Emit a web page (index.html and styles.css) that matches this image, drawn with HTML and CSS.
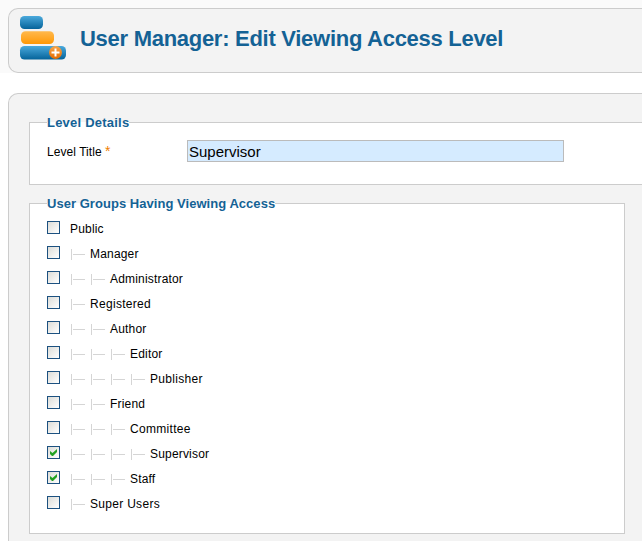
FILE: index.html
```html
<!DOCTYPE html>
<html lang="en">
<head>
<meta charset="utf-8">
<title>User Manager: Edit Viewing Access Level</title>
<link rel="stylesheet" href="styles.css">
</head>
<body>
<header class="top">
  <div class="toolbar">
    <svg class="logo" width="48" height="46" viewBox="0 0 48 46" aria-hidden="true">
      <defs>
        <linearGradient id="blue" x2="0" y2="1"><stop stop-color="#4aa9dc"/><stop offset="1" stop-color="#05639a"/></linearGradient>
        <linearGradient id="orange" x2="0" y2="1"><stop stop-color="#ffb94d"/><stop offset="1" stop-color="#ff9805"/></linearGradient>
        <linearGradient id="badge" x2="0" y2="1"><stop stop-color="#f9a64a"/><stop offset="1" stop-color="#e56b00"/></linearGradient>
      </defs>
      <rect x="1" y="1" width="23" height="13" rx="4.5" fill="url(#blue)"/>
      <rect x="2" y="16.3" width="33" height="12.7" rx="4.5" fill="url(#orange)"/>
      <rect x="1" y="31" width="46" height="13.5" rx="4.5" fill="url(#blue)"/>
      <circle cx="36.5" cy="37.5" r="6.5" fill="url(#badge)"/>
      <path d="M36.5 33.5v8M32.5 37.5h8" stroke="#fff" stroke-width="2"/>
    </svg>
    <h1>User Manager: Edit Viewing Access Level</h1>
  </div>
</header>
<main class="content">
  <section class="panel details">
    <h2 class="legend-details">Level Details</h2>
    <div class="field">
      <label for="title">Level Title <span class="star">*</span></label>
      <input id="title" type="text" value="Supervisor">
    </div>
  </section>
  <section class="panel groups">
    <h2 class="legend-groups">User Groups Having Viewing Access</h2>
    <ul>
      <li><input type="checkbox"><span>Public</span></li>
      <li><input type="checkbox"><i></i><span>Manager</span></li>
      <li><input type="checkbox"><i></i><i></i><span>Administrator</span></li>
      <li><input type="checkbox"><i></i><span class="wide">Registered</span></li>
      <li><input type="checkbox"><i></i><i></i><span>Author</span></li>
      <li><input type="checkbox"><i></i><i></i><i></i><span>Editor</span></li>
      <li><input type="checkbox"><i></i><i></i><i></i><i></i><span class="wide">Publisher</span></li>
      <li><input type="checkbox"><i></i><i></i><span>Friend</span></li>
      <li><input type="checkbox"><i></i><i></i><i></i><span class="wide">Committee</span></li>
      <li><input type="checkbox" checked><i></i><i></i><i></i><i></i><span>Supervisor</span></li>
      <li><input type="checkbox" checked><i></i><i></i><i></i><span>Staff</span></li>
      <li><input type="checkbox"><i></i><span class="wide">Super Users</span></li>
    </ul>
  </section>
</main>
</body>
</html>
```
FILE: styles.css
```css
* { box-sizing: border-box; }
html { overflow: hidden; }
body {
  margin: 0;
  height: 541px;
  overflow: hidden;
  background: #fff;
  color: #000;
  font: 12px/16px "Liberation Sans", Arial, sans-serif;
}
.top { height: 73px; padding: 8px 0 0 8px; background: #fafafa; }
.toolbar {
  display: flex;
  height: 65px;
  padding-left: 10px;
  border: 1px solid #ccc;
  border-right: 0;
  border-radius: 10px 0 0 10px;
  background: #f3f3f3;
}
.logo { flex: none; margin-top: 6px; }
h1 {
  margin: 17px 0 0 13px;
  color: #146295;
  font-size: 22px;
  line-height: 26px;
  letter-spacing: -.28px;
  white-space: nowrap;
}
.content {
  height: 448px;
  margin: 20px 0 0 8px;
  padding: 28px 0 0 20px;
  border: 1px solid #ccc;
  border-right: 0;
  border-bottom: 0;
  border-radius: 10px 0 0 0;
  background: #f3f3f3;
}
.panel { padding-left: 17px; border: 1px solid #ccc; background: #fff; }
.details { height: 63px; border-right: 0; }
.groups { width: 596px; height: 331px; margin-top: 18px; }
h2 {
  width: max-content;
  height: 16px;
  margin: -8px 0 0;
  background: linear-gradient(#fff, #fff) 0 7px / 100% 1px no-repeat;
  color: #146295;
  font-size: 13px;
  line-height: 16px;
  white-space: nowrap;
}
.legend-details { letter-spacing: .22px; }
.legend-groups { letter-spacing: .04px; }
.field { display: flex; margin-top: 9px; }
.field label { width: 140px; padding-top: 4px; letter-spacing: .06px; }
.star { color: #f08000; font-size: 14px; line-height: 12px; }
.field input {
  width: 377px;
  height: 22px;
  padding: 1px 1px 0;
  border: 1px solid #bbb;
  border-radius: 0;
  outline: 0;
  background: #d5ebff;
  color: #000;
  font: 15px "Liberation Sans", Arial, sans-serif;
}
ul { margin: 6px 0 0; padding: 0; list-style: none; }
li { display: flex; height: 25px; padding-top: 3px; }
li input {
  appearance: none;
  flex: none;
  width: 13px;
  height: 13px;
  margin: 0 10px 0 0;
  border: 1px solid #1c5180;
  background: linear-gradient(135deg, #dcdcd7, #fff);
}
li input:checked {
  background:
    url("data:image/svg+xml,%3Csvg xmlns='http://www.w3.org/2000/svg' viewBox='0 0 11 11'%3E%3Cpath d='M2 4v3l2 2h1l4-4V2L4.5 6z' fill='%2321a121'/%3E%3C/svg%3E"),
    linear-gradient(135deg, #dcdcd7, #fff);
}
li i {
  width: 20px;
  height: 11px;
  margin-top: 3px;
  background:
    linear-gradient(#d5d5d5, #d5d5d5) 1px 0 / 1px 11px no-repeat,
    linear-gradient(#d5d5d5, #d5d5d5) 3px 5px / 12px 1px no-repeat;
}
li span { letter-spacing: .18px; white-space: nowrap; }
li .wide { letter-spacing: .3px; }
```
